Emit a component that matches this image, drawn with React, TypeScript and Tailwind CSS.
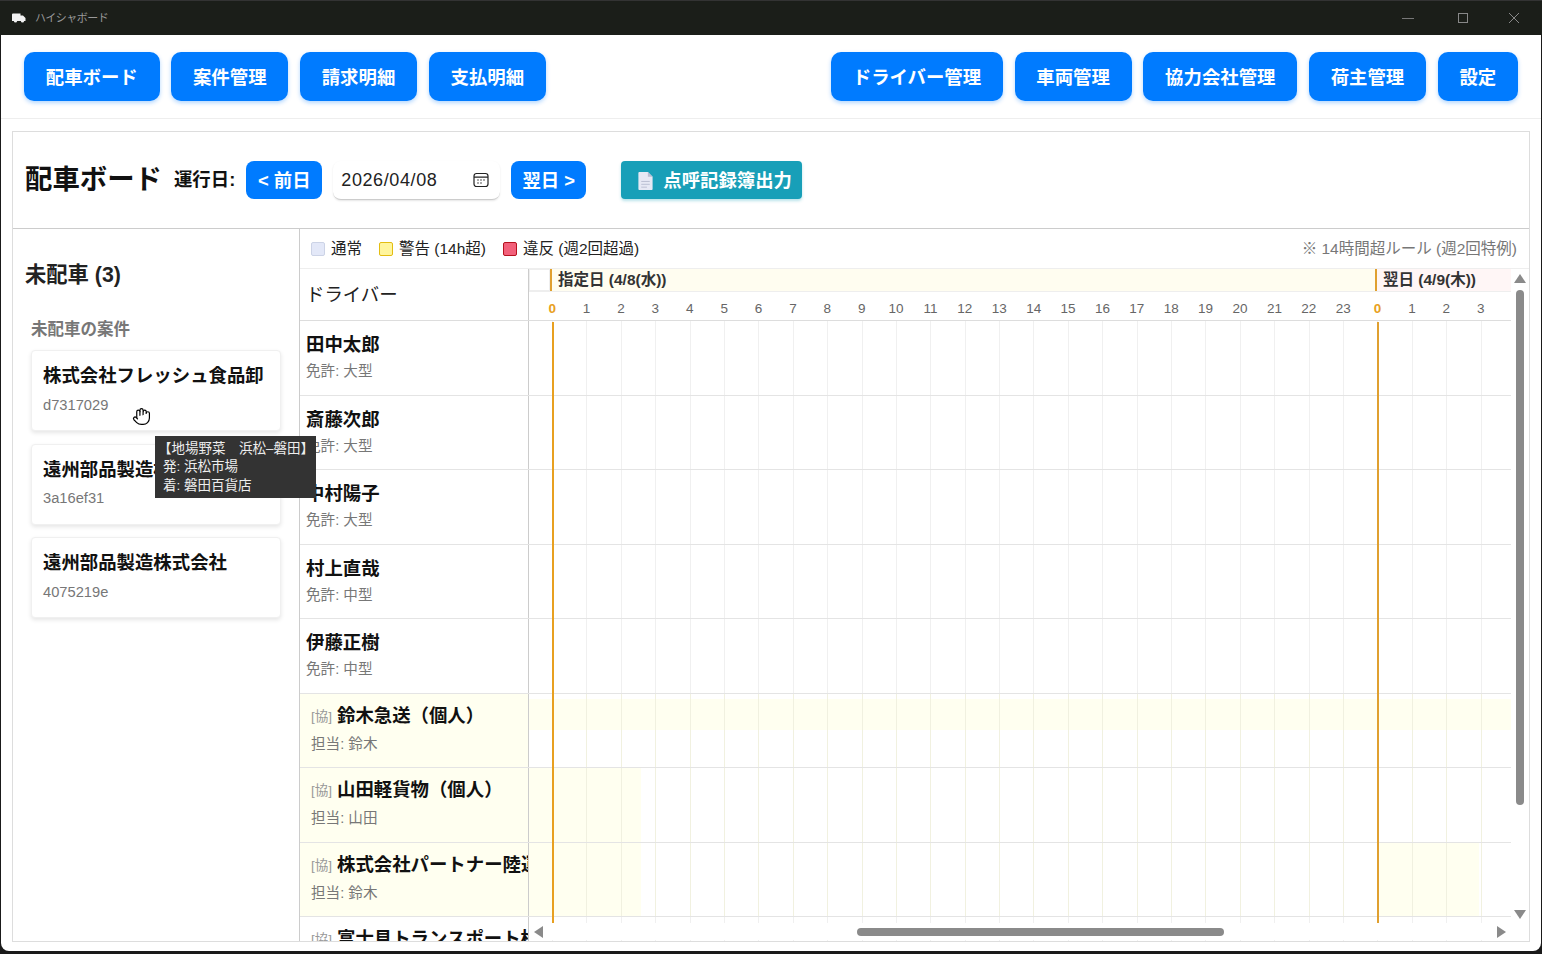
import { Hand } from "lucide-react";

const FONT = "font-['Liberation_Sans','Noto_Sans_CJK_JP',sans-serif]";

const NAV_LEFT = ["配車ボード", "案件管理", "請求明細", "支払明細"];
const NAV_RIGHT = ["ドライバー管理", "車両管理", "協力会社管理", "荷主管理", "設定"];

const HOURS = [...Array(24).keys(), 0, 1, 2, 3, 4];

interface Row {
  name: string;
  sub: string;
  partner?: boolean;
  tint?: string;
}

const ROWS: Row[] = [
  { name: "田中太郎", sub: "免許: 大型" },
  { name: "斎藤次郎", sub: "免許: 大型" },
  { name: "中村陽子", sub: "免許: 大型" },
  { name: "村上直哉", sub: "免許: 中型" },
  { name: "伊藤正樹", sub: "免許: 中型" },
  {
    name: "鈴木急送（個人）",
    sub: "担当: 鈴木",
    partner: true,
    tint: "bg-[linear-gradient(180deg,#ffffff_0,#ffffff_5px,#fffff0_5px,#fffff0_36px,#ffffff_36px)]",
  },
  {
    name: "山田軽貨物（個人）",
    sub: "担当: 山田",
    partner: true,
    tint: "bg-[linear-gradient(90deg,#fffff0_0,#fffff0_112px,#ffffff_112px)]",
  },
  {
    name: "株式会社パートナー陸運",
    sub: "担当: 鈴木",
    partner: true,
    tint: "bg-[linear-gradient(90deg,#fffff0_0,#fffff0_112px,#ffffff_112px,#ffffff_850px,#fffff0_850px,#fffff0_950px,#ffffff_950px)]",
  },
  { name: "富士見トランスポート株式会社", sub: "担当: 鈴木", partner: true },
];

const CARDS = [
  { title: "株式会社フレッシュ食品卸", id: "d7317029" },
  { title: "遠州部品製造株式会社", id: "3a16ef31" },
  { title: "遠州部品製造株式会社", id: "4075219e" },
];

function NavButton({ label }: { label: string }) {
  return (
    <button className="h-[49px] rounded-[10px] bg-[#007bff] px-[21.8px] pt-[2px] text-[18.4px] font-bold text-white shadow-[0_2px_4px_rgba(0,123,255,0.3)]">
      {label}
    </button>
  );
}

function DayButton({ label, width }: { label: string; width: string }) {
  return (
    <button className={`h-[38px] rounded-[8px] bg-[#007bff] pt-[1px] text-[18.4px] font-bold text-white ${width}`}>
      {label}
    </button>
  );
}

function Legend({ swatch, label }: { swatch: string; label: string }) {
  return (
    <div className="flex items-center gap-[6px]">
      <span className={`h-[14px] w-[14px] rounded-[2px] border ${swatch}`} />
      <span>{label}</span>
    </div>
  );
}

function TimelineRow({ tint }: { tint?: string }) {
  return (
    <div className={`flex flex-1 overflow-hidden pl-[23px] ${tint ?? ""}`}>
      {HOURS.map((h, i) => (
        <div
          key={i}
          className={`h-full w-[34.4px] shrink-0 border-l ${tint ? "border-[#f1f1e0]" : "border-[#f0f0f0]"}`}
        />
      ))}
    </div>
  );
}

function DriverCell({ row }: { row: Row }) {
  return (
    <div
      className={`w-[229px] shrink-0 overflow-hidden whitespace-nowrap border-r border-[#ccc] ${
        row.partner ? "pl-[11px] pt-[10px]" : "pl-[6px] pt-[12px]"
      } ${row.tint ? "bg-[#fffff0]" : ""}`}
    >
      <div className="flex h-[24px] items-center text-[18.4px] font-bold text-[#111]">
        {row.partner && <span className="mr-[5px] mt-[3px] text-[13.5px] font-normal text-[#999]">[協]</span>}
        {row.name}
      </div>
      <div className={`text-[14.6px] leading-[24px] text-[#777] ${row.partner ? "mt-[4px]" : "mt-[2px]"}`}>{row.sub}</div>
    </div>
  );
}

function Arrow({ dir }: { dir: "up" | "down" | "left" | "right" }) {
  const points = {
    up: "0,9 6,0 12,9",
    down: "0,0 12,0 6,9",
    left: "9,0 9,12 0,6",
    right: "0,0 9,6 0,12",
  }[dir];
  const box = dir === "up" || dir === "down" ? "w-[12px] h-[9px]" : "w-[9px] h-[12px]";
  return (
    <svg viewBox={dir === "up" || dir === "down" ? "0 0 12 9" : "0 0 9 12"} className={box}>
      <polygon points={points} fill="#8a8a8a" />
    </svg>
  );
}

export default function App() {
  return (
    <div className={`h-[954px] w-[1542px] overflow-hidden bg-[#1a1a1a] ${FONT}`}>
      {/* title bar */}
      <div className="flex h-[35px] items-center border-t border-[#333] bg-[#1b1e19] pl-[12px] text-[#8f8f8f]">
        <svg viewBox="0 0 14 10" className="h-[10px] w-[14px]">
          <path d="M0 1.5 Q0 .5 1 .5 H8.5 V2.5 H11 L13.5 5 V8 H0 Z" fill="#f2f2f2" />
          <circle cx="3.5" cy="8" r="1.6" fill="#f2f2f2" />
          <circle cx="10.5" cy="8" r="1.6" fill="#f2f2f2" />
        </svg>
        <span className="ml-[9px] text-[11px] tracking-[-0.5px] text-[#999]">ハイシャボード</span>
        <div className="ml-auto flex items-center">
          <span className="mr-[44px] h-px w-[12px] bg-[#777]" />
          <span className="mr-[41px] h-[10px] w-[10px] border border-[#888]" />
          <svg viewBox="0 0 10 10" className="mr-[23px] h-[10px] w-[10px]" stroke="#888" fill="none">
            <path d="M0 0 L10 10 M10 0 L0 10" />
          </svg>
        </div>
      </div>

      <div className="relative ml-px mr-[1px] h-[916px] overflow-hidden rounded-b-[8px] bg-white">
        {/* top nav */}
        <nav className="flex h-[84px] items-start justify-between border-b border-[#eee] px-[23px] pt-[17px]">
          <div className="flex gap-[11.6px]">
            {NAV_LEFT.map((l) => (
              <NavButton key={l} label={l} />
            ))}
          </div>
          <div className="flex gap-[11.6px]">
            {NAV_RIGHT.map((l) => (
              <NavButton key={l} label={l} />
            ))}
          </div>
        </nav>

        <main className="mx-[11px] mt-[12px] flex h-[811px] w-[1518px] flex-col border border-[#ddd]">
          {/* board header */}
          <div className="flex h-[97px] shrink-0 items-center border-b border-[#ccc] pl-[12px]">
            <h1 className="text-[27.4px] font-bold text-[#111]">配車ボード</h1>
            <span className="ml-[12px] text-[18.4px] font-bold text-[#111]">運行日:</span>
            <div className="ml-[11px]">
              <DayButton label="< 前日" width="w-[76px]" />
            </div>
            <div className="ml-[11px] flex h-[39px] w-[167px] items-center rounded-[8px] border-b border-[#ccc] bg-white pl-[8px] pr-[11px] pt-[1px] text-[18px] tracking-[0.6px] text-[#222] shadow-[0_1px_2px_rgba(0,0,0,0.1)]">
              <span>2026/04/08</span>
              <svg viewBox="0 0 16 16" className="ml-auto h-[16px] w-[16px]" fill="none" stroke="#222" strokeWidth="1.2">
                <rect x="1" y="1.5" width="14" height="13" rx="2.5" />
                <path d="M1 5.2 H15" />
                <path d="M4.5 8 h1 M7.5 8 h1 M10.5 8 h1 M4.5 11 h1 M7.5 11 h1" strokeWidth="1.4" />
              </svg>
            </div>
            <div className="ml-[11px]">
              <DayButton label="翌日 >" width="w-[75px]" />
            </div>
            <button className="ml-[35px] flex h-[38px] w-[181px] items-center rounded-[4px] bg-[#189fb8] pl-[17px] pt-[1px] text-[18.4px] font-bold text-white shadow-[0_2px_3px_rgba(23,162,184,0.3)]">
              <svg viewBox="0 0 15 19" className="h-[18px] w-[15px]">
                <path d="M0 1 Q0 0 1 0 H10 L15 5 V18 Q15 19 14 19 H1 Q0 19 0 18 Z" fill="#e6e8f4" />
                <path d="M10 0 L15 5 H10 Z" fill="#b9bdd2" />
                <path d="M3 10 H12 M3 13 H12 M3 16 H9" stroke="#b9bdd2" />
              </svg>
              <span className="ml-[10px]">点呼記録簿出力</span>
            </button>
          </div>

          <div className="flex min-h-0 flex-1">
            {/* unassigned column */}
            <aside className="w-[287px] shrink-0 border-r border-[#ccc] pl-[12px] pr-[17px]">
              <h2 className="mt-[32px] text-[21.3px] font-bold leading-[28px] text-[#222]">未配車 (3)</h2>
              <h3 className="ml-[6px] mt-[28px] text-[16.5px] font-bold leading-[24px] text-[#777]">未配車の案件</h3>
              <div className="ml-[6px] mt-[9px] flex flex-col gap-[12.5px]">
                {CARDS.map((c) => (
                  <div
                    key={c.id}
                    className="h-[81px] w-[250px] rounded-[4px] border border-[#f0f0f0] bg-white pl-[11px] pt-[12px] shadow-[0_2px_4px_rgba(0,0,0,0.1)]"
                  >
                    <div className="whitespace-nowrap text-[18.4px] font-bold leading-[26px] text-[#111]">{c.title}</div>
                    <div className="mt-[5.5px] text-[14.7px] leading-[20px] text-[#777]">{c.id}</div>
                  </div>
                ))}
              </div>
            </aside>

            {/* timeline */}
            <section className="flex min-w-0 flex-1 flex-col">
              <div className="flex h-[40px] shrink-0 items-center gap-[17px] border-b border-[#eee] pl-[11px] pr-[12px] text-[15.5px] text-[#222]">
                <Legend swatch="bg-[#e3e8f8] border-[#ccd3e6]" label="通常" />
                <Legend swatch="bg-[#fff59d] border-[#e3bd12]" label="警告 (14h超)" />
                <Legend swatch="bg-[#f2607a] border-[#b5121f]" label="違反 (週2回超過)" />
                <span className="ml-auto text-[#777]">※ 14時間超ルール (週2回特例)</span>
              </div>

              <div className="relative flex min-h-0 flex-1">
                <div className="min-w-0 flex-1 overflow-hidden">
                  {/* header rows */}
                  <div className="flex h-[52px] border-b border-[#ddd]">
                    <div className="flex w-[229px] shrink-0 items-center border-r border-[#ccc] pl-[6px] text-[18.4px] text-[#222]">
                      ドライバー
                    </div>
                    <div className="min-w-0 flex-1 overflow-hidden">
                      <div className="flex h-[23px] border-b border-[#eee] text-[15.5px] font-bold text-[#333]">
                        <div className="w-[21px] shrink-0 border border-[#eee]" />
                        <div className="w-[825px] shrink-0 border-l-[2px] border-[#e0a030] bg-[#fffdf0] pl-[6px] leading-[21px]">
                          指定日 (4/8(水))
                        </div>
                        <div className="min-w-0 flex-1 whitespace-nowrap border-l-[2px] border-[#e0a030] bg-[#fff6f6] pl-[6px] leading-[21px]">
                          翌日 (4/9(木))
                        </div>
                      </div>
                      <div className="flex h-[28px] pl-[6px] text-[13.5px] leading-[34px] text-[#666]">
                        {HOURS.map((h, i) => (
                          <div
                            key={i}
                            className={`w-[34.4px] shrink-0 text-center ${
                              h === 0 ? "font-bold text-[#e8a020]" : ""
                            }`}
                          >
                            {h}
                          </div>
                        ))}
                      </div>
                    </div>
                  </div>

                  {/* rows */}
                  {ROWS.map((r) => (
                    <div key={r.name} className="flex h-[74.5px] border-b border-[#e4e4e4]">
                      <DriverCell row={r} />
                      <TimelineRow tint={r.tint} />
                    </div>
                  ))}
                </div>

                {/* vertical scrollbar */}
                <div className="flex w-[18px] shrink-0 flex-col items-center pt-[5px]">
                  <Arrow dir="up" />
                  <div className="mt-[7px] h-[515px] w-[8px] rounded-[4px] bg-[#8a8a8a]" />
                  <div className="mt-auto mb-[22px]">
                    <Arrow dir="down" />
                  </div>
                </div>

                {/* orange day markers */}
                <div className="absolute bottom-[17px] left-[252px] top-[53px] w-[2px] bg-[#e8a020]" />
                <div className="absolute bottom-[17px] left-[1077px] top-[53px] w-[2px] bg-[#e0a030]" />

                {/* horizontal scrollbar */}
                <div className="absolute bottom-[1px] left-[229px] right-[18px] flex h-[17px] items-center bg-white pl-[5px] pr-[5px]">
                  <Arrow dir="left" />
                  <div className="ml-[314px] h-[8px] w-[367px] rounded-[4px] bg-[#8a8a8a]" />
                  <div className="ml-auto">
                    <Arrow dir="right" />
                  </div>
                </div>
              </div>
            </section>
          </div>
        </main>

        {/* hover tooltip */}
        <div className="absolute left-[154px] top-[401px] h-[62px] w-[161px] whitespace-nowrap bg-[#333] px-[8px] pt-[3.5px] text-[13.5px] leading-[18.5px] text-[#eee]">
          <div className="-ml-[5px]">【地場野菜　浜松–磐田】</div>
          <div>発: 浜松市場</div>
          <div>着: 磐田百貨店</div>
        </div>

        {/* cursor */}
        <Hand className="absolute left-[131px] top-[372px] h-[19px] w-[19px] fill-white text-black" strokeWidth={1.5} />
      </div>
    </div>
  );
}
